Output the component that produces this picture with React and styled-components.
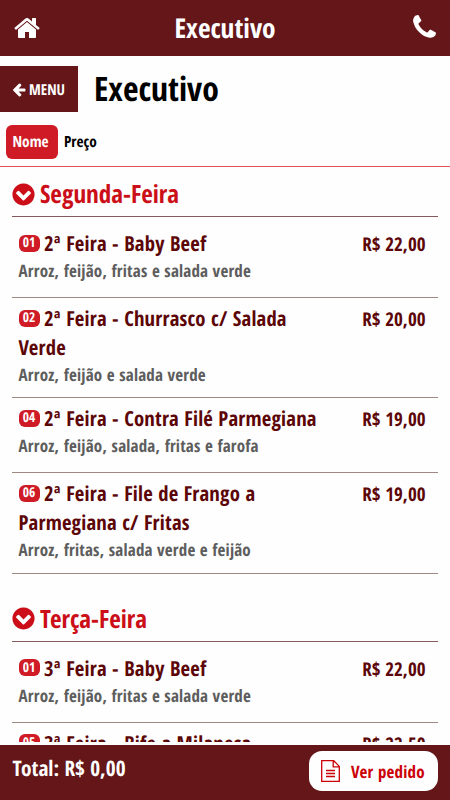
import React from "react";
import styled, { createGlobalStyle } from "styled-components";

const GlobalStyle = createGlobalStyle`
  * { box-sizing: border-box; }
  body {
    margin: 0;
    background: #fff;
    font-family: "Open Sans Condensed", "Open Sans", sans-serif;
    font-stretch: 75%;
    font-weight: 700;
    text-rendering: geometricPrecision;
  }
`;

const wine = "#641619";
const red = "#ce1b25";

const Screen = styled.div`
  width: 450px;
  height: 800px;
  overflow: hidden;
  display: flex;
  flex-direction: column;
  background: #fefefe;
`;

const TopBar = styled.header`
  height: 56px;
  flex: none;
  display: grid;
  grid-template-columns: 60px 1fr 60px;
  align-items: center;
  background: ${wine};
  color: #fff;
`;

const TopTitle = styled.h1`
  margin: 0;
  font-size: 27.3px;
  line-height: 56px;
  text-align: center;
`;

const Glyph = styled.svg`
  display: block;
  flex: none;
  width: ${(p) => p.$size}px;
  height: ${(p) => p.$size}px;
  fill: currentColor;
`;

const TopLink = styled.a`
  display: flex;
  justify-content: ${(p) => (p.$end ? "flex-end" : "flex-start")};
  padding: 0 ${(p) => (p.$end ? 11 : 0)}px ${(p) => (p.$end ? 2 : 1)}px 13px;
`;

const TitleRow = styled.div`
  flex: none;
  display: flex;
  align-items: flex-start;
  margin-top: 10px;
  height: 47px;
`;

const MenuButton = styled.a`
  display: flex;
  align-items: center;
  gap: 3px;
  width: 77.5px;
  height: 46px;
  padding: 1px 0 0 12px;
  background: ${wine};
  color: #fff;
  font-size: 15px;
`;

const PageTitle = styled.h2`
  margin: 0 0 0 16.5px;
  font-size: 33.7px;
  line-height: 45px;
`;

const Tabs = styled.nav`
  flex: none;
  display: flex;
  align-items: center;
  height: 54px;
  padding: 4px 6px 0;
  border-bottom: 1px solid #de5159;
`;

const Tab = styled.a`
  height: 34px;
  line-height: 34px;
  padding: 0 ${(p) => (p.$active ? 9 : 7)}px 0 6.5px;
  border-radius: 6px;
  font-size: 15.3px;
  background: ${(p) => (p.$active ? red : "transparent")};
  color: ${(p) => (p.$active ? "#fff" : "#000")};
`;

const List = styled.main`
  height: 575px;
  flex: none;
  overflow: hidden;
  padding: 0 12px;
`;

const Section = styled.section`
  margin-bottom: 18px;
`;

const SectionTitle = styled.h3`
  display: flex;
  align-items: center;
  gap: 5px;
  height: 50px;
  margin: 0;
  padding-top: 5px;
  border-bottom: 1px solid #855a5d;
  color: #cb0e18;
  font-size: 25.1px;
  line-height: 44px;
`;

const Item = styled.article`
  display: flex;
  justify-content: space-between;
  height: ${(p) => p.$height}px;
  padding: ${(p) => (p.$first ? 12 : 6)}px 12.5px 0 6.5px;
  border-bottom: 1px solid #9e8a83;
`;

const ItemText = styled.div`
  width: 310px;
`;

const ItemName = styled.div`
  margin: 1px 0 -1px;
  color: #5c0608;
  font-size: 20.7px;
  line-height: 29px;
  letter-spacing: 0.2px;
`;

const Badge = styled.span`
  display: inline-flex;
  align-items: center;
  justify-content: center;
  width: 21px;
  height: 17px;
  margin-right: 4.5px;
  border-radius: 6px;
  background: ${red};
  color: #fff;
  font-size: 13.5px;
  line-height: 15px;
  padding-bottom: 1px;
  letter-spacing: 0;
  vertical-align: 4px;
`;

const ItemDetails = styled.div`
  color: #5d5d5d;
  font-size: 17px;
  line-height: 26px;
  letter-spacing: 0.2px;
`;

const Price = styled.div`
  color: #5c0608;
  font-size: 19px;
  line-height: 30px;
  white-space: nowrap;
`;

const OrderBar = styled.footer`
  height: 55px;
  flex: none;
  display: flex;
  justify-content: space-between;
  margin-top: 3px;
  padding: 6px 12px 0;
  background: ${wine};
  color: #fff;
`;

const Total = styled.div`
  padding-left: 0.5px;
  font-size: 21.3px;
  line-height: 36px;
`;

const OrderButton = styled.a`
  display: flex;
  align-items: center;
  gap: 11px;
  width: 129.5px;
  height: 40px;
  padding-left: 12.5px;
  border-radius: 13px;
  background: #fefefe;
  color: #cc0007;
  font-size: 17px;
  letter-spacing: 0.2px;
`;

const FileSvg = styled.svg`
  display: block;
  width: 19px;
  height: 22px;
  fill: none;
  stroke: currentColor;
  stroke-width: 1.3;
`;

const paths = {
  home: "M1472 992v480q0 26-19 45t-45 19h-384v-384h-256v384h-384q-26 0-45-19t-19-45v-480q0-1 .5-3t.5-3l575-474 575 474q1 2 1 6zm223-69l-62 74q-8 9-21 11h-3q-13 0-21-7l-692-577-692 577q-12 8-24 7-13-2-21-11l-62-74q-8-10-7-23.5t11-21.5l719-599q32-26 76-26t76 26l244 204v-195q0-14 9-23t23-9h192q14 0 23 9t9 23v408l219 182q10 8 11 21.5t-7 23.5z",
  phone: "M1600 1240q0 27-10 70.5t-21 68.5q-21 50-122 106-94 51-186 51-27 0-53-3.5t-57.5-12.5-47-14.5-55.5-20.5-49-18q-98-35-175-83-127-79-264-216t-216-264q-48-77-83-175-3-9-18-49t-20.5-55.5-14.5-47-12.5-57.5-3.5-53q0-92 51-186 56-101 106-122 25-11 68.5-21t70.5-10q14 0 21 3 18 6 53 76 11 19 30 54t35 63.5 31 53.5q3 4 17.5 25t21.5 35.5 7 28.5q0 20-28.5 50t-62 55-62 53-28.5 46q0 9 5 22.5t8.5 20.5 14 24 11.5 19q76 137 174 235t235 174q2 1 19 11.5t24 14 20.5 8.5 22.5 5q18 0 46-28.5t53-62 55-62 50-28.5q14 0 28.5 7t35.5 21.5 25 17.5q25 15 53.5 31t63.5 35 54 30q70 35 76 53 3 7 3 21z",
  arrow: "M1664 896v128q0 53-32.5 90.5t-84.5 37.5h-704l293 294q38 36 38 90t-38 90l-75 76q-37 37-90 37-52 0-91-37l-651-652q-37-37-37-90 0-52 37-91l651-650q38-38 91-38 52 0 90 38l75 74q38 38 38 91t-38 91l-293 293h704q52 0 84.5 37.5t32.5 90.5z",
  chevron: "M941 1299l454-454q19-19 19-45t-19-45l-102-102q-19-19-45-19t-45 19l-307 307-307-307q-19-19-45-19t-45 19l-102 102q-19 19-19 45t19 45l454 454q19 19 45 19t45-19zm723-403q0 209-103 385.5t-279.5 279.5-385.5 103-385.5-103-279.5-279.5-103-385.5 103-385.5 279.5-279.5 385.5-103 385.5 103 279.5 279.5 103 385.5z",
};

const Icon = ({ name, size, viewBox = "0 0 1792 1792" }) => (
  <Glyph $size={size} viewBox={viewBox} aria-hidden="true">
    <path d={paths[name]} />
  </Glyph>
);

const FileIcon = () => (
  <FileSvg viewBox="0 0 19 22" aria-hidden="true">
    <path d="M.7.7h12l5.6 5.7v14.9H.7zM12.2.7v6.1h6.1M5 10.5h9M5 13.5h9M5 16.5h9" />
  </FileSvg>
);

const sections = [
  {
    title: "Segunda-Feira",
    items: [
      { code: "01", name: "2ª Feira - Baby Beef", details: "Arroz, feijão, fritas e salada verde", price: "R$ 22,00", height: 81 },
      { code: "02", name: "2ª Feira - Churrasco c/ Salada Verde", details: "Arroz, feijão e salada verde", price: "R$ 20,00", height: 100 },
      { code: "04", name: "2ª Feira - Contra Filé Parmegiana", details: "Arroz, feijão, salada, fritas e farofa", price: "R$ 19,00", height: 75 },
      { code: "06", name: "2ª Feira - File de Frango a Parmegiana c/ Fritas", details: "Arroz, fritas, salada verde e feijão", price: "R$ 19,00", height: 100.5 },
    ],
  },
  {
    title: "Terça-Feira",
    items: [
      { code: "01", name: "3ª Feira - Baby Beef", details: "Arroz, feijão, fritas e salada verde", price: "R$ 22,00", height: 81 },
      { code: "05", name: "3ª Feira - Bife a Milanesa", details: "", price: "R$ 22,50", height: 75 },
    ],
  },
];

export default function App() {
  return (
    <Screen>
      <GlobalStyle />
      <TopBar>
        <TopLink><Icon name="home" size={28} /></TopLink>
        <TopTitle>Executivo</TopTitle>
        <TopLink $end><Icon name="phone" size={29} /></TopLink>
      </TopBar>
      <TitleRow>
        <MenuButton><Icon name="arrow" size={14} viewBox="64 128 1664 1664" />MENU</MenuButton>
        <PageTitle>Executivo</PageTitle>
      </TitleRow>
      <Tabs>
        <Tab $active>Nome</Tab>
        <Tab>Preço</Tab>
      </Tabs>
      <List>
        {sections.map((s) => (
          <Section key={s.title}>
            <SectionTitle>
              <Icon name="chevron" size={23} viewBox="100 100 1592 1592" />
              {s.title}
            </SectionTitle>
            {s.items.map((it, i) => (
              <Item key={it.code} $height={it.height} $first={i === 0}>
                <ItemText>
                  <ItemName><Badge>{it.code}</Badge>{it.name}</ItemName>
                  <ItemDetails>{it.details}</ItemDetails>
                </ItemText>
                <Price>{it.price}</Price>
              </Item>
            ))}
          </Section>
        ))}
      </List>
      <OrderBar>
        <Total>Total: R$ 0,00</Total>
        <OrderButton><FileIcon />Ver pedido</OrderButton>
      </OrderBar>
    </Screen>
  );
}
